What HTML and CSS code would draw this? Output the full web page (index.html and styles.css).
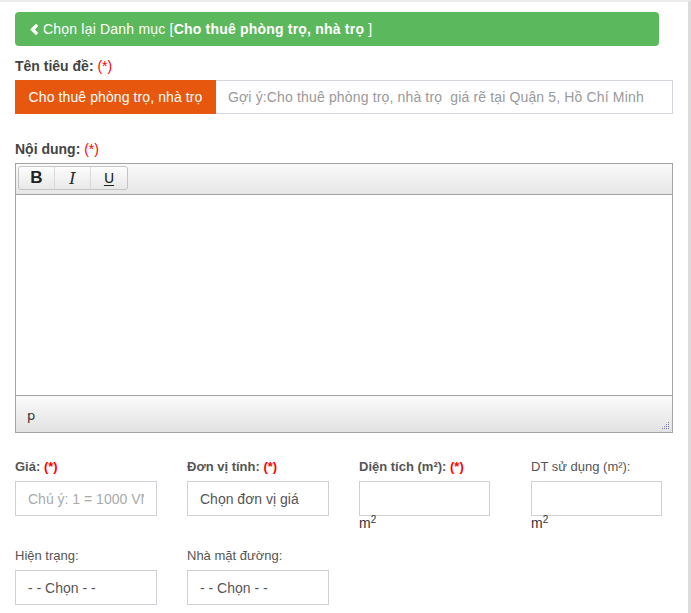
FILE: index.html
```html
<!DOCTYPE html>
<html lang="vi">
<head>
<meta charset="utf-8">
<title>Đăng tin</title>
<link rel="stylesheet" href="styles.css">
</head>
<body>
<div class="page">
  <div class="cat-bar">
    <svg class="chev" viewBox="0 0 10 14" width="9" height="13"><path d="M6.6 0.6 L9.2 3.2 L5.4 7 L9.2 10.8 L6.6 13.4 L0.2 7 Z" fill="#fff"/></svg>
    <span>Chọn lại Danh mục [<b>Cho thuê phòng trọ, nhà trọ</b> ]</span>
  </div>

  <div class="label-lg">Tên tiêu đề: <span class="req">(*)</span></div>
  <div class="input-group">
    <span class="addon">Cho thuê phòng trọ, nhà trọ</span>
    <input class="title-input" type="text" placeholder="Gợi ý:Cho thuê phòng trọ, nhà trọ  giá rẽ tại Quận 5, Hồ Chí Minh">
  </div>

  <div class="label-lg label-content">Nội dung: <span class="req">(*)</span></div>
  <div class="editor">
    <div class="toolbar">
      <div class="btn-group">
        <span class="tbtn tb-b">B</span>
        <span class="tbtn tb-i">I</span>
        <span class="tbtn tb-u">U</span>
      </div>
    </div>
    <div class="edit-area"></div>
    <div class="statusbar">
      <span class="path">p</span>
      <svg class="grip" viewBox="0 0 10 10" width="10" height="10">
        <g fill="#7a7fa8">
          <rect x="8" y="2" width="1" height="1"/>
          <rect x="6" y="4" width="1" height="1"/><rect x="8" y="4" width="1" height="1"/>
          <rect x="4" y="6" width="1" height="1"/><rect x="6" y="6" width="1" height="1"/><rect x="8" y="6" width="1" height="1"/>
          <rect x="2" y="8" width="1" height="1"/><rect x="4" y="8" width="1" height="1"/><rect x="6" y="8" width="1" height="1"/><rect x="8" y="8" width="1" height="1"/>
        </g>
      </svg>
    </div>
  </div>

  <div class="fields">
    <div class="field">
      <div class="flabel strong">Giá: <span class="req">(*)</span></div>
      <input class="box" type="text" placeholder="Chú ý: 1 = 1000 VND">
    </div>
    <div class="field">
      <div class="flabel strong">Đơn vị tính: <span class="req">(*)</span></div>
      <div class="box sel">Chọn đơn vị giá</div>
    </div>
    <div class="field">
      <div class="flabel strong">Diện tích (m²): <span class="req">(*)</span></div>
      <input class="box box-sm" type="text">
      <div class="unit">m<sup>2</sup></div>
    </div>
    <div class="field">
      <div class="flabel">DT sử dụng (m²):</div>
      <input class="box box-sm" type="text">
      <div class="unit">m<sup>2</sup></div>
    </div>
  </div>

  <div class="fields fields-2">
    <div class="field">
      <div class="flabel">Hiện trạng:</div>
      <div class="box sel">- - Chọn - -</div>
    </div>
    <div class="field">
      <div class="flabel">Nhà mặt đường:</div>
      <div class="box sel">- - Chọn - -</div>
    </div>
  </div>
</div>
</body>
</html>
```

FILE: styles.css
```css
html, body {
  margin: 0;
  padding: 0;
  background: #fff;
}
body {
  font-family: "Liberation Sans", Arial, sans-serif;
  font-size: 14px;
  color: #333;
}
.page {
  width: 658px;
  min-height: 611px;
  border-top: 2px solid #ececec;
  border-right: 3px solid #dcdcdc;
  padding: 10px 15px 0 15px;
  box-sizing: content-box;
  overflow: hidden;
}
.cat-bar {
  height: 34px;
  margin-right: 14px;
  background: #5cb85c;
  border-radius: 4px;
  color: #fff;
  display: flex;
  align-items: center;
  padding-left: 15px;
  font-size: 14px;
  letter-spacing: 0.2px;
}
.cat-bar .chev {
  margin-right: 4px;
  margin-top: 1px;
}
.cat-bar b { font-weight: bold; }

.label-lg {
  margin-top: 12px;
  font-weight: bold;
  font-size: 14px;
  line-height: 16px;
  color: #444;
  margin-bottom: 6px;
}
.label-content {
  margin-top: 27px;
}
.req { color: #f00; font-weight: normal; }
.label-lg .req { font-weight: normal; }

.input-group {
  display: flex;
  height: 34px;
}
.addon {
  background: #e8570e;
  color: #fff;
  width: 201px;
  display: flex;
  align-items: center;
  justify-content: center;
  white-space: nowrap;
  font-size: 14px;
  letter-spacing: 0.1px;
  flex: none;
}
.title-input {
  flex: 1;
  min-width: 0;
  height: 34px;
  box-sizing: border-box;
  border: 1px solid #d3d3dc;
  border-left: none;
  padding: 0 12px;
  font-family: "Liberation Sans", Arial, sans-serif;
  font-size: 14px;
  letter-spacing: 0.15px;
  outline: none;
}
.title-input::placeholder { color: #999; }

.editor {
  border: 1px solid #a3a3a3;
  height: 268px;
  display: flex;
  flex-direction: column;
}
.toolbar {
  border-bottom: 1px solid #a3a3a3;
  background: linear-gradient(#fafafa, #e6e6e6);
  padding: 2px 0 0 2px;
  box-sizing: border-box;
  height: 31px;
}
.btn-group {
  display: inline-flex;
  height: 24px;
  border: 1px solid #c4c4c4;
  border-radius: 3px;
  background: linear-gradient(#fdfdfd, #e8e8e8);
  box-sizing: border-box;
}
.tbtn {
  width: 35px;
  display: flex;
  align-items: center;
  justify-content: center;
  color: #222;
  border-right: 1px solid #dadada;
}
.tbtn:last-child { border-right: none; width: 36px; }
.tb-b { font-weight: bold; font-family: "Liberation Sans", sans-serif; font-size: 17px; }
.tb-i { font-style: italic; font-family: "DejaVu Serif", serif; font-size: 16px; }
.tb-u { text-decoration: underline; text-underline-offset: 2px; font-family: "DejaVu Sans", sans-serif; font-size: 14px; }
.edit-area {
  height: 200px;
  background: #fff;
}
.statusbar {
  flex: 1;
  border-top: 1px solid #a3a3a3;
  background: linear-gradient(#fbfbfb, #e2e2e2);
  display: flex;
  align-items: center;
  justify-content: space-between;
  padding: 0 2px 0 11px;
}
.statusbar .path {
  font-family: "DejaVu Sans", sans-serif;
  font-size: 13px;
  color: #333;
  margin-top: 2px;
}
.statusbar .grip {
  align-self: flex-end;
  margin-bottom: 2px;
}

.fields {
  display: grid;
  grid-template-columns: repeat(4, 142px);
  column-gap: 30px;
  margin-top: 26px;
}
.fields-2 {
  margin-top: 18px;
}
.flabel {
  font-size: 13px;
  line-height: 15px;
  color: #555;
  margin-bottom: 7px;
  white-space: nowrap;
}
.flabel.strong { font-weight: bold; }
.flabel .req { font-weight: normal; }
.flabel.strong .req { font-weight: bold; }
.box {
  display: flex;
  align-items: center;
  width: 142px;
  height: 35px;
  box-sizing: border-box;
  border: 1px solid #d0d0d8;
  padding: 0 12px;
  font-family: "Liberation Sans", Arial, sans-serif;
  font-size: 14px;
  color: #555;
  background: #fff;
  outline: none;
  margin: 0;
}
.box-sm { width: 131px; }
input.box::placeholder { color: #aaa; }
.box.sel { color: #555; }
.unit {
  font-size: 14px;
  line-height: 14px;
  color: #333;
}
.unit sup {
  font-size: 10px;
  vertical-align: 5px;
  line-height: 0;
}
```
